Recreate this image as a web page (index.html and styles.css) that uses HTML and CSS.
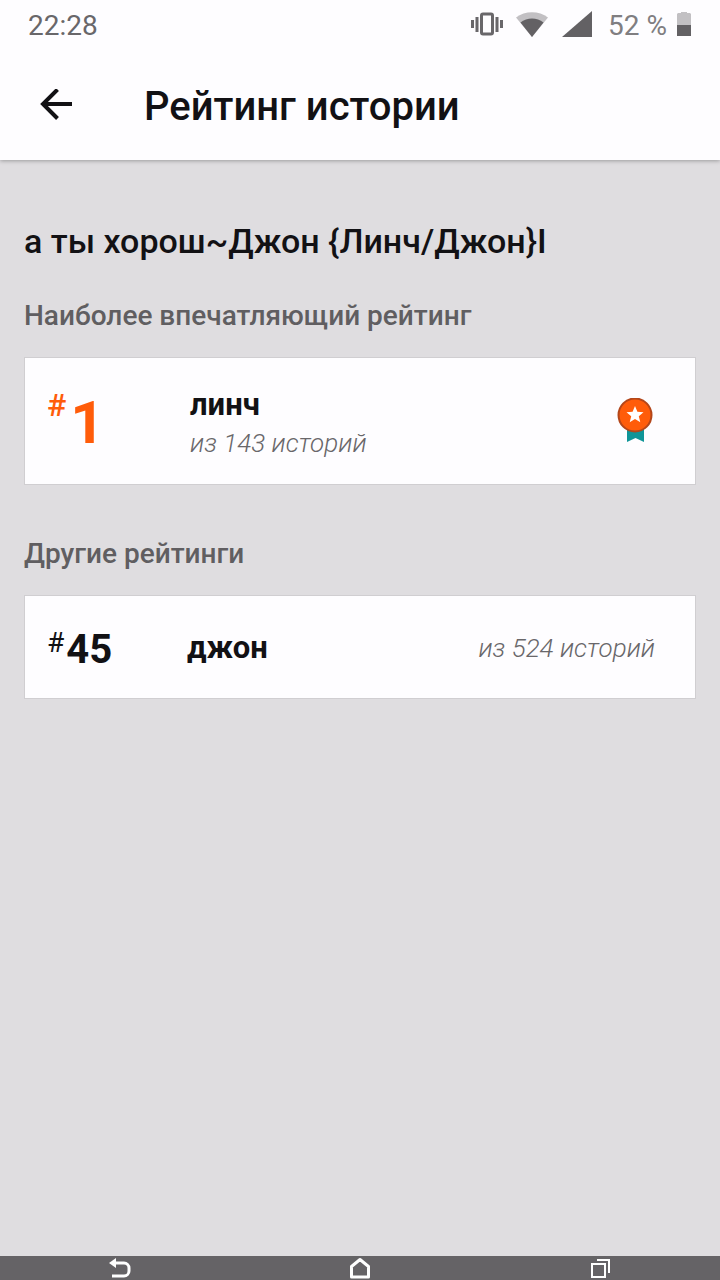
FILE: index.html
```
<!DOCTYPE html>
<html lang="ru">
<head>
  <meta charset="UTF-8" />
  <meta name="viewport" content="width=device-width, initial-scale=1.0"/>
  <title>Рейтинг истории</title>
  <link rel="stylesheet" href="styles.css">
</head>
<body>
  <header class="app-header">
    <div class="status-bar">
      <span class="clock">22:28</span>
      <div class="status-icons">
        <svg class="vibrate" width="34" height="26" viewBox="0 0 34 26" fill="none" stroke="#69676a">
          <rect x="11.500" y="2" width="11" height="20" rx="1.500" stroke-width="3"/>
          <path d="M7 5v15M27 5v15" stroke-width="3"/>
          <path d="M2.500 8v8M31.500 8v8" stroke-width="3"/>
        </svg>
        <svg class="wifi" width="32" height="26" viewBox="0 0 32 26">
          <path d="M0 5.500C9 -1.500 23 -1.500 32 5.500L16 25z" fill="#c2c0c3"/>
          <path d="M4.500 10.500C11 5 21 5 27.500 10.500L16 25z" fill="#636164"/>
        </svg>
        <svg class="signal" width="30" height="28" viewBox="0 0 30 28">
          <path d="M30 0v26H0z" fill="#636164"/>
        </svg>
        <span class="battery-text">52 %</span>
        <svg width="14" height="26" viewBox="0 0 14 26">
          <path d="M4 -1h6v2h3l1 1v11H0V2l1-1h3z" fill="#c2c0c3"/>
          <path d="M0 13h14v11H0z" fill="#636164"/>
        </svg>
      </div>
    </div>
    <div class="toolbar">
      <button type="button" class="back" aria-label="Назад">
        <svg width="32" height="32" viewBox="0 0 32 32" fill="none" stroke="#121114" stroke-width="4">
          <path d="M32 15H3M17.500 0.500L3 15l14.500 14.500"/>
        </svg>
      </button>
      <h1>Рейтинг истории</h1>
    </div>
  </header>

  <main>
    <h2 class="story-title">а ты хорош~Джон {Линч/Джон}I</h2>

    <section>
      <h3>Наиболее впечатляющий рейтинг</h3>
      <div class="card card-top">
        <div class="rank"><span class="hash">#</span><strong>1</strong></div>
        <div class="info">
          <span class="tag">линч</span>
          <span class="total">из 143 историй</span>
        </div>
        <svg class="medal" width="36" height="46" viewBox="0 0 36 46">
          <path d="M10 30h17v14l-8.500-4L10 44z" fill="#109598"/>
          <circle cx="18" cy="17" r="16.500" fill="#ff5c0a" stroke="#b3461a" stroke-width="2"/>
          <path d="M18 8l2.400 5.700 6.100.5-4.700 4 1.500 6-5.300-3.200-5.300 3.200 1.500-6-4.700-4 6.100-.5z" fill="#fff"/>
        </svg>
      </div>
    </section>

    <section>
      <h3>Другие рейтинги</h3>
      <div class="card card-other">
        <div class="rank"><span class="hash">#</span><strong>45</strong></div>
        <span class="tag">джон</span>
        <span class="total">из 524 историй</span>
      </div>
    </section>
  </main>

  <nav class="nav-bar">
    <button type="button" aria-label="Назад">
      <svg width="22" height="22" viewBox="0 0 22 22" fill="none" stroke="#fff" stroke-width="3">
        <path d="M5 6h10a5 5 0 0 1 5 5v3a5 5 0 0 1-5 5H3"/>
        <path d="M0 6l7-5v10z" fill="#fff" stroke="none"/>
      </svg>
    </button>
    <button type="button" aria-label="Домой">
      <svg width="22" height="22" viewBox="0 0 22 22" fill="none" stroke="#fff" stroke-width="3" stroke-linejoin="round">
        <path d="M2.500 9.500L11 2.500l8.500 7v10.500h-17z"/>
      </svg>
    </button>
    <button type="button" aria-label="Недавние">
      <svg width="22" height="22" viewBox="0 0 22 22" fill="none" stroke="#fff" stroke-width="2">
        <path d="M3 7h13v13H3zM8 3h12v13"/>
      </svg>
    </button>
  </nav>
</body>
</html>
```
FILE: styles.css
```
* {
  box-sizing: border-box;
}
body {
  margin: 0;
  min-height: 100vh;
  display: flex;
  flex-direction: column;
  background: #dfdde0;
  font-family: Roboto, sans-serif;
  color: #121114;
}
h1, h2, h3 {
  margin: 0;
  font-weight: 500;
}
button {
  padding: 0;
  border: none;
  background: none;
  cursor: pointer;
}
svg {
  display: block;
}
.app-header {
  background: #fefdff;
  box-shadow: 0 1px 4px rgba(0, 0, 0, 0.3);
}
.status-bar {
  display: flex;
  justify-content: space-between;
  align-items: center;
  height: 50px;
  padding: 0 29px 0 28px;
  font-size: 28px;
  color: #69676a;
}
.status-icons {
  display: flex;
  align-items: center;
}
.wifi {
  margin: 0 14px 0 12px;
}
.battery-text {
  margin: 0 10px 0 16px;
  color: #807e81;
}
.toolbar {
  display: flex;
  align-items: center;
  gap: 72px;
  height: 110px;
  padding: 0 40px;
}
.toolbar h1 {
  padding-top: 2px;
  font-size: 40px;
}
main {
  flex: 1;
  padding: 60px 24px 24px;
}
.story-title {
  font-size: 34px;
  line-height: 42px;
  margin-bottom: 35px;
}
section {
  margin-bottom: 50px;
}
h3 {
  font-size: 28px;
  line-height: 38px;
  margin-bottom: 22px;
  color: #605e61;
}
.card {
  display: flex;
  align-items: center;
  padding: 0 40px 0 22px;
  background: #fefdff;
  border: 1px solid #d0ced1;
}
.card-top {
  height: 128px;
}
.card-other {
  height: 104px;
}
.rank {
  display: flex;
  align-items: flex-start;
  padding-top: 4px;
}
.card-top .rank {
  width: 143px;
  gap: 4px;
  color: #ff5c0a;
}
.card-top .hash {
  font-size: 32px;
  font-weight: 500;
}
.card-top strong {
  font-size: 60px;
  line-height: 74px;
}
.card-other .rank {
  width: 140px;
  gap: 2px;
}
.card-other .hash {
  font-size: 28px;
}
.card-other strong {
  font-size: 40px;
}
.info {
  flex: 1;
  display: flex;
  flex-direction: column;
  padding-top: 6px;
}
.tag {
  font-size: 31px;
  line-height: 38px;
  font-weight: 700;
}
.total {
  font-size: 26px;
  line-height: 38px;
  font-style: italic;
  font-weight: 300;
  color: #69676a;
}
.medal {
  margin-right: 2px;
}
.card-other .tag,
.card-other .total {
  padding-top: 2px;
}
.card-other .total {
  margin-left: auto;
}
.nav-bar {
  display: flex;
  justify-content: space-around;
  height: 24px;
  background: #656366;
}
.nav-bar button {
  display: flex;
  align-items: center;
}
```
